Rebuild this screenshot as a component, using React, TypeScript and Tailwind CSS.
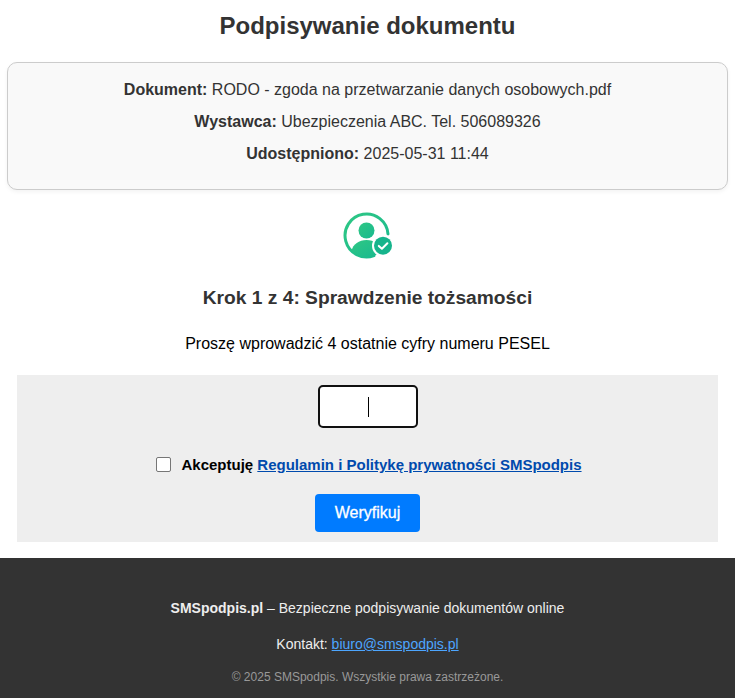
export default function App() {
  return (
    <div className="min-h-[698px] bg-white font-['Liberation_Sans',Arial,sans-serif] text-[#333]">
      <div className="px-[7px]">
        <h1 className="pt-[12px] text-center text-2xl leading-[28px] font-bold">Podpisywanie dokumentu</h1>
        <div className="mt-[22px] flex h-[128px] flex-col gap-[10px] rounded-[10px] border border-[#ccc] bg-[#f9f9f9] pt-[16px] text-center text-base leading-[22px] shadow-[0_2px_4px_rgba(0,0,0,0.05)]">
          <p><b>Dokument:</b> RODO - zgoda na przetwarzanie danych osobowych.pdf</p>
          <p><b>Wystawca:</b> Ubezpieczenia ABC. Tel. 506089326</p>
          <p><b>Udostępniono:</b> 2025-05-31 11:44</p>
        </div>
      </div>
      <div className="mt-[22px] flex justify-center">
        <svg width="50" height="50" viewBox="0 0 50 50" fill="none">
          <defs>
            <linearGradient id="g" x1="0" y1="0" x2="1" y2="1" gradientUnits="objectBoundingBox">
              <stop offset="0" stopColor="#2fc784" />
              <stop offset="1" stopColor="#18b98f" />
            </linearGradient>
          </defs>
          <path d="M45 22A21.5 21.5 0 1 0 31 43.7" stroke="url(#g)" strokeWidth="3" strokeLinecap="round" />
          <circle cx="23.5" cy="18.5" r="8" fill="url(#g)" />
          <path d="M8.5 39C10 32 16 28 23.5 28C31 28 37 32 38.5 39A21.5 21.5 0 0 1 8.5 39Z" fill="url(#g)" />
          <circle cx="40" cy="33.7" r="11" fill="#fff" />
          <circle cx="40" cy="33.7" r="9" fill="#16b48c" />
          <path d="M35.8 33.9L38.9 36.8L44.4 31.2" stroke="#fff" strokeWidth="2" strokeLinecap="round" strokeLinejoin="round" />
        </svg>
      </div>
      <h2 className="mt-[23px] text-center text-[19.2px] leading-[26px] font-bold">Krok 1 z 4: Sprawdzenie tożsamości</h2>
      <p className="mt-[22px] text-center text-base leading-[22px] text-black">Proszę wprowadzić 4 ostatnie cyfry numeru PESEL</p>
      <div className="mx-[17px] mt-[20px] flex h-[167px] flex-col items-center bg-[#eee] pt-[10px]">
        <div className="relative">
          <input className="block h-[43px] w-[100px] rounded-[5px] border-2 border-[#101010] bg-white outline-none" aria-label="PESEL" />
          <span className="absolute top-[12px] left-[50px] h-[20px] w-px bg-black" />
        </div>
        <label className="mt-[28px] ml-[3px] flex h-[18px] items-center font-bold text-black">
          <input type="checkbox" className="mr-[10px] mb-[1px] size-[15px] appearance-none rounded-[2px] border border-[#767676] bg-white" />
          <span className="text-[15px]">
            Akceptuję <a href="#" className="text-[#004aad] underline">Regulamin i Politykę prywatności SMSpodpis</a>
          </span>
        </label>
        <button className="mt-[20px] h-[38px] w-[105px] rounded-[4px] bg-[#007bff] text-base text-white [-webkit-text-stroke:0.3px_white]">Weryfikuj</button>
      </div>
      <footer className="mt-[16px] flex h-[140px] flex-col items-center bg-[#333] pt-[41px] text-sm leading-[18px] text-[#eee]">
        <p><b>SMSpodpis.pl</b> – Bezpieczne podpisywanie dokumentów online</p>
        <p className="mt-[18px]">Kontakt: <a href="#" className="text-[#4da6ff] underline">biuro@smspodpis.pl</a></p>
        <p className="mt-[16px] text-xs text-[#999]">© 2025 SMSpodpis. Wszystkie prawa zastrzeżone.</p>
      </footer>
    </div>
  );
}
